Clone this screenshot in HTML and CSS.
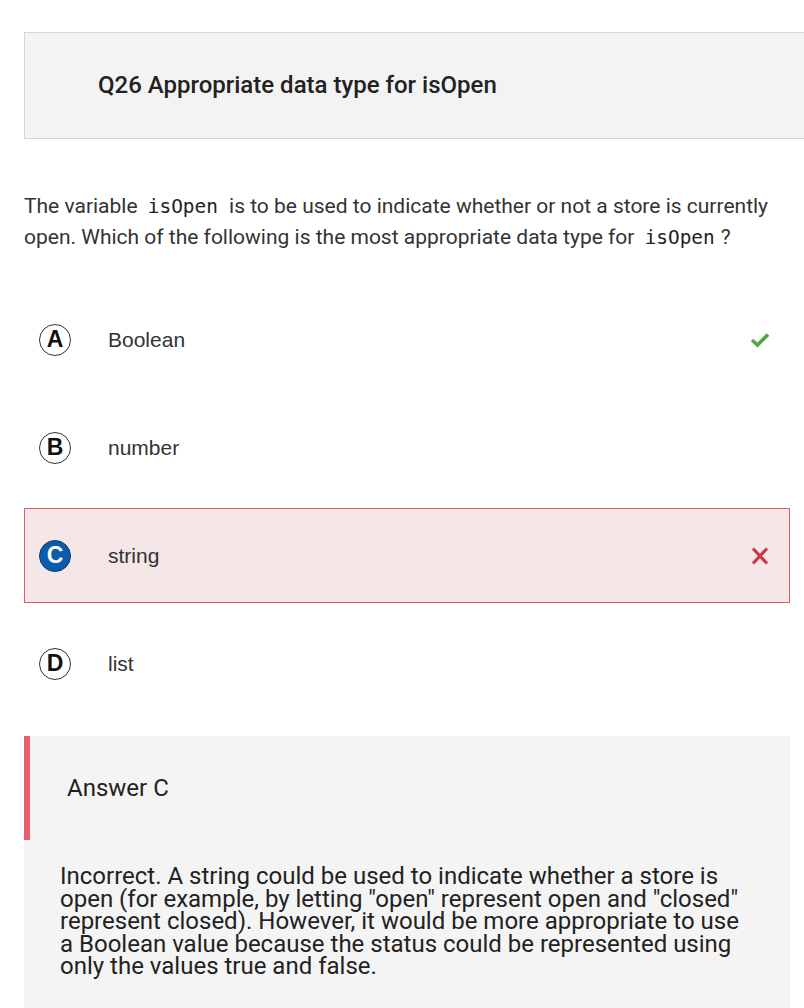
FILE: index.html
```html
<!DOCTYPE html>
<html>
<head>
<meta charset="utf-8">
<link rel="stylesheet" href="styles.css">
</head>
<body>
<div class="page">
  <div class="q-header">
    <h1 class="q-title">Q26 Appropriate data type for isOpen</h1>
  </div>
  <p class="q-text"><span>The variable</span> <code>isOpen</code> <span>is to be used to indicate whether or not a store is currently</span> <span>open. Which of the following is the most appropriate data type for</span> <code>isOpen</code><span>?</span></p>
  <div class="options">
    <div class="option">
      <span class="badge">A</span>
      <span class="opt-text">Boolean</span>
      <svg class="mark" width="20" height="16" viewBox="0 0 20 16"><polyline points="2,8 7.5,13 18,2.5" fill="none" stroke="#4ca93e" stroke-width="3.6"/></svg>
    </div>
    <div class="option">
      <span class="badge">B</span>
      <span class="opt-text">number</span>
    </div>
    <div class="option wrong">
      <span class="badge selected">C</span>
      <span class="opt-text">string</span>
      <svg class="mark" width="20" height="18" viewBox="0 0 20 18"><path d="M3,1.5 L17,16.5 M17,1.5 L3,16.5" fill="none" stroke="#c73a4c" stroke-width="3.2"/></svg>
    </div>
    <div class="option">
      <span class="badge">D</span>
      <span class="opt-text">list</span>
    </div>
  </div>
  <div class="answer">
    <div class="answer-head">Answer C</div>
    <p class="answer-body">Incorrect. A string could be used to indicate whether a store is open (for example, by letting "open" represent open and "closed" represent closed). However, it would be more appropriate to use a Boolean value because the status could be represented using only the values true and false.</p>
  </div>
</div>
</body>
</html>
```

FILE: styles.css
```css
html, body {
  margin: 0;
  padding: 0;
  background: #ffffff;
  overflow: hidden;
}
.page {
  padding: 32px 0 0 24px;
  font-family: Roboto, "Liberation Sans", sans-serif;
  color: #333333;
}
.q-header {
  background: #f3f3f3;
  border: 1px solid #d5d5d5;
  border-right: none;
  height: 105px;
  display: flex;
  align-items: center;
  padding-left: 73px;
}
.q-title {
  margin: 0;
  font-size: 24px;
  font-weight: 500;
  color: #222222;
  padding-bottom: 2px;
}
.q-text {
  margin: 52px 14px 0 0;
  font-size: 21px;
  line-height: 31px;
  color: #333333;
}
.q-text code {
  font-family: "DejaVu Sans Mono", "Liberation Mono", monospace;
  font-size: 19.4px;
  line-height: 20px;
  margin: 0 6px 0 5px;
  color: #222222;
}
.options {
  margin: 39px 14px 0 0;
  display: flex;
  flex-direction: column;
  gap: 13px;
}
.option {
  height: 95px;
  box-sizing: border-box;
  border: 1px solid transparent;
  display: flex;
  align-items: center;
  padding: 0 19px 0 14px;
}
.option.wrong {
  background: #f5e6e7;
  border-color: #e25a69;
}
.badge {
  width: 32px;
  height: 32px;
  box-sizing: border-box;
  border: 1px solid #333333;
  border-radius: 50%;
  display: flex;
  align-items: center;
  justify-content: center;
  font-family: "Liberation Sans", Arial, sans-serif;
  font-weight: 700;
  font-size: 23px;
  color: #111111;
  flex: none;
}
.badge.selected {
  background: #0b5cab;
  border-color: #0a3f78;
  color: #ffffff;
}
.opt-text {
  margin-left: 37px;
  font-family: "Liberation Sans", Arial, sans-serif;
  font-size: 21px;
  color: #333333;
  flex: 1;
}
.mark {
  flex: none;
}
.answer {
  margin: 25px 14px 0 0;
  background: #f4f4f4;
  padding-bottom: 40px;
}
.answer-head {
  height: 104px;
  border-left: 6px solid #e8606e;
  display: flex;
  align-items: center;
  padding-left: 37px;
  font-size: 24px;
  color: #222222;
}
.answer-body {
  margin: 25px 0 0 0;
  padding: 0 40px 0 36px;
  font-size: 24px;
  line-height: 22.5px;
  color: #222222;
}
```
